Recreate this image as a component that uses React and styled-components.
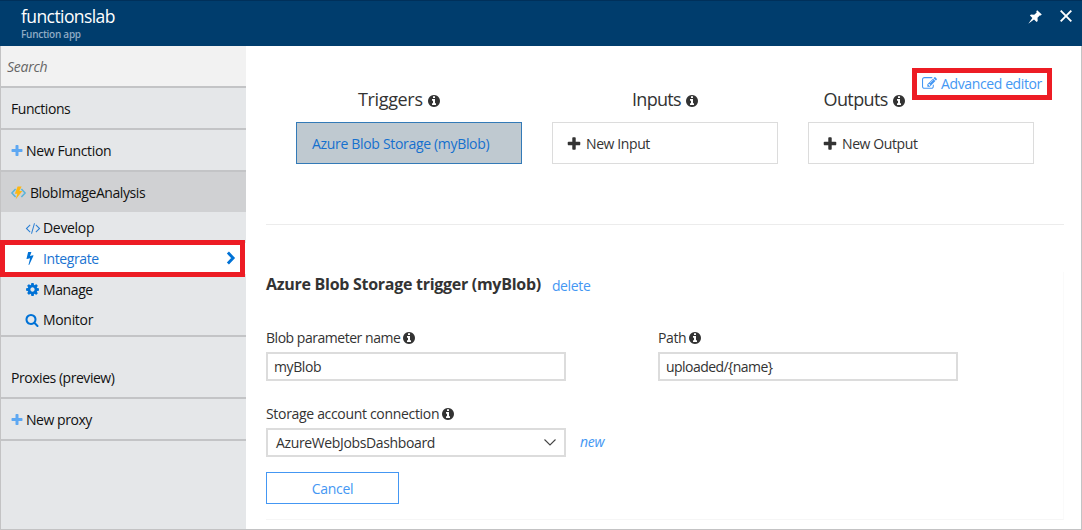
import React from "react";
import styled, { createGlobalStyle } from "styled-components";

const Global = createGlobalStyle`
  *, *::before, *::after { box-sizing: border-box; }
  body { margin: 0; background: #fff; }
  body, input, button { font-family: "Open Sans", "Noto Sans", sans-serif; font-size: 14px; }
`;

/* ---------- icons ---------- */

const PATHS = {
  info: "M1152 1376v-160q0-14-9-23t-23-9h-96v-512q0-14-9-23t-23-9h-320q-14 0-23 9t-9 23v160q0 14 9 23t23 9h96v320h-96q-14 0-23 9t-9 23v160q0 14 9 23t23 9h448q14 0 23-9t9-23zm-128-896v-160q0-14-9-23t-23-9h-192q-14 0-23 9t-9 23v160q0 14 9 23t23 9h192q14 0 23-9t9-23zm640 416q0 209-103 385.5t-279.5 279.5-385.5 103-385.5-103-279.5-279.5-103-385.5 103-385.5 279.5-279.5 385.5-103 385.5 103 279.5 279.5 103 385.5z",
  plus: "M1600 736v192q0 40-28 68t-68 28h-416v416q0 40-28 68t-68 28h-192q-40 0-68-28t-28-68v-416h-416q-40 0-68-28t-28-68v-192q0-40 28-68t68-28h416v-416q0-40 28-68t68-28h192q40 0 68 28t28 68v416h416q40 0 68 28t28 68z",
  edit: "M888 1184l116-116-152-152-116 116v56h96v96h56zm440-720q-16-16-33 1l-350 350q-17 17-1 33t33-1l350-350q17-17 1-33zm80 594v190q0 119-84.5 203.5t-203.5 84.5h-832q-119 0-203.5-84.5t-84.5-203.5v-832q0-119 84.5-203.5t203.5-84.5h832q63 0 117 25 15 7 18 23 3 17-9 29l-49 49q-14 14-32 8-23-6-45-6h-832q-66 0-113 47t-47 113v832q0 66 47 113t113 47h832q66 0 113-47t47-113v-126q0-13 9-22l64-64q15-15 35-7t20 29zm-96-738l288 288-672 672h-288v-288zm444 132l-92 92-288-288 92-92q28-28 68-28t68 28l152 152q28 28 28 68t-28 68z",
  search: "M1216 832q0-185-131.5-316.5t-316.5-131.5-316.5 131.5-131.5 316.5 131.5 316.5 316.5 131.5 316.5-131.5 131.5-316.5zm512 832q0 52-38 90t-90 38q-54 0-90-38l-343-342q-179 124-399 124-143 0-273.5-55.5t-225-150-150-225-55.5-273.5 55.5-273.5 150-225 225-150 273.5-55.5 273.5 55.5 225 150 150 225 55.5 273.5q0 220-124 399l343 343q37 37 37 90z",
  cog: "M1152 896q0-106-75-181t-181-75-181 75-75 181 75 181 181 75 181-75 75-181zm512-109v222q0 12-8 23t-20 13l-185 28q-19 54-39 91 35 50 107 138 10 12 10 25t-9 23q-27 37-99 108t-94 71q-12 0-26-9l-138-108q-44 23-91 38-16 136-29 186-7 28-36 28h-222q-14 0-24.5-8.5t-11.5-21.5l-28-184q-49-16-90-37l-141 107q-10 9-25 9-14 0-25-11-126-114-165-168-7-10-7-23 0-12 8-23 15-21 51-66.5t54-70.5q-27-50-41-99l-183-27q-13-2-21-12.5t-8-23.5v-222q0-12 8-23t19-13l186-28q14-46 39-92-40-57-107-138-10-12-10-24 0-10 9-23 26-36 98.5-107.5t94.5-71.5q13 0 26 10l138 107q44-23 91-38 16-136 29-186 7-28 36-28h222q14 0 24.5 8.5t11.5 21.5l28 184q49 16 90 37l142-107q9-9 24-9 13 0 25 10 129 119 165 170 7 8 7 22 0 12-8 23-15 21-51 66.5t-54 70.5q26 50 41 98l183 28q13 2 21 12.5t8 23.5z",
  bolt: "M1333 566q18 20 7 44l-540 1157q-13 25-42 25-4 0-14-2-17-5-25.5-19t-4.5-30l197-808-406 101q-4 1-12 1-18 0-31-11-18-16-13-39l201-825q4-14 16-23t28-9h328q19 0 32 12.5t13 29.5q0 8-5 18l-171 463 396-98q8-2 12-2 19 0 34 15z",
  code: "M553 1399l-50 50q-10 10-23 10t-23-10l-466-466q-10-10-10-23t10-23l466-466q10-10 23-10t23 10l50 50q10 10 10 23t-10 23l-393 393 393 393q10 10 10 23t-10 23zm591-1067l-373 1291q-4 13-15.5 19.5t-23.5 2.5l-62-17q-13-4-19.5-15.5t-2.5-24.5l373-1291q4-13 15.5-19.5t23.5-2.5l62 17q13 4 19.5 15.5t2.5 24.5zm657 651l-466 466q-10 10-23 10t-23-10l-50-50q-10-10-10-23t10-23l393-393-393-393q-10-10-10-23t10-23l50-50q10-10 23-10t23 10l466 466q10 10 10 23t-10 23z",
};

const Svg = styled.svg`
  display: block;
  flex: none;
  overflow: visible;
  fill: ${(p) => p.$color || "currentColor"};
`;

const Icon = ({ name, size = 14, color }) => (
  <Svg viewBox="0 0 1792 1792" width={size} height={size} $color={color}>
    <path d={PATHS[name]} />
  </Svg>
);

const FunctionIcon = () => (
  <Svg width="15" height="14" viewBox="0 0 15 14">
    <path d="M4.6 3 .9 7l3.7 4M10.4 3l3.7 4-3.7 4" fill="none" stroke="#59b4d9" strokeWidth="1.5" />
    <path d="M6.6.6h4L8.4 5h3L4.6 13.4 6.4 7.8H3.8z" fill="#fcb714" />
  </Svg>
);

const PinIcon = () => (
  <Svg width="14" height="14" viewBox="0 0 14 14">
    <path d="M9.2.2 13.8 4.6l-1.2.9-.9-.1-2.2 2.4.2 3.1-1.1 1-2.6-2.5L.3 13.8 4.4 8.1 1.9 5.6l1.1-1.1 3.2.2 2.5-2.3-.4-1.2z" />
  </Svg>
);

const CloseIcon = () => (
  <Svg width="12" height="12" viewBox="0 0 12 12">
    <path d="M.7.7l10.6 10.6M11.3.7.7 11.3" stroke="#fff" strokeWidth="1.9" />
  </Svg>
);

const ChevronRight = () => (
  <Svg width="10" height="14" viewBox="0 0 10 14">
    <path d="M1.9 1.6 7.1 7l-5.2 5.4" fill="none" stroke="#0072d6" strokeWidth="2.9" />
  </Svg>
);

const ChevronDown = () => (
  <Svg width="12" height="7" viewBox="0 0 12 7">
    <path d="M.5.5 6 6 11.5.5" fill="none" stroke="#444" strokeWidth="1.1" />
  </Svg>
);

/* ---------- frame ---------- */

const Blade = styled.div`
  position: relative;
  display: flex;
  flex-direction: column;
  width: 1082px;
  height: 530px;
  overflow: hidden;
  color: #333;
`;

const Header = styled.header`
  display: flex;
  justify-content: space-between;
  flex: none;
  height: 46px;
  padding: 5px 10px 0 21px;
  background: #003d6d;
  border-top: 1px solid #00305a;
  color: #fff;
`;

const Title = styled.h1`
  margin: 0;
  font-size: 17.5px;
  line-height: 21px;
  font-weight: 400;
  white-space: nowrap;
  letter-spacing: -0.58px;
`;

const Subtitle = styled.div`
  font-size: 10px;
  line-height: 14px;
  font-weight: 600;
  color: #8fabc5;
  letter-spacing: -0.27px;
`;

const HeaderActions = styled.div`
  display: flex;
  align-items: flex-start;
  gap: 18px;
  padding-top: 4px;
`;

const Body = styled.div`
  display: flex;
  flex: 1;
  min-height: 0;
  border: 1px solid #c3c3c4;
  border-top: 0;
`;

const Label = styled.span`
  white-space: nowrap;
  letter-spacing: ${(p) => p.$ls ?? -0.32}px;
`;

/* ---------- sidebar ---------- */

const Sidebar = styled.nav`
  flex: none;
  width: 245px;
  background: #e5e7e9;
  color: #111;
`;

const SearchBox = styled.div`
  display: flex;
  align-items: center;
  height: 42px;
  padding: 0 6px;
  background: #f2f2f2;
  border-bottom: 2px solid #c3c4c6;
  color: #666;
  font-style: italic;
`;

const NavRow = styled.div`
  display: flex;
  align-items: ${(p) => (p.$tall ? "flex-end" : "center")};
  gap: 2px;
  height: ${(p) => (p.$tall ? 62 : 42)}px;
  padding: ${(p) => (p.$tall ? "0 10px 10px" : p.$icon ? "0 9px" : "0 10px")};
  border-bottom: 2px solid #c3c4c6;

  svg { margin-top: 1px; }
`;

const FunctionRow = styled(NavRow)`
  gap: 4px;
  height: 40px;
  padding-top: 1px;
  background: #d0d1d3;
  border-bottom: 0;
`;

const SubNav = styled.div`
  height: 125px;
  border-bottom: 2px solid #c3c4c6;
`;

const SubRow = styled.div`
  display: flex;
  align-items: center;
  height: 30.75px;
  padding: 0.5px 10px 0 24px;
  background: ${(p) => (p.$active ? "#fff" : "transparent")};
  color: ${(p) => (p.$active ? "#1a73d2" : "#111")};
`;

const IconSlot = styled.span`
  width: 18px;
  margin-left: ${(p) => p.$shift || 0}px;
  margin-right: ${(p) => -(p.$shift || 0)}px;
`;

const Grow = styled.span`
  flex: 1;
`;

/* ---------- main panel ---------- */

const Main = styled.main`
  flex: 1;
  padding: 43px 17px 0 20px;
`;

const Bindings = styled.section`
  display: flex;
  gap: 30px;
  height: 136px;
  padding-left: 30px;
  border-bottom: 1px solid #ececec;
`;

const BindingColumn = styled.div`
  width: 226px;
`;

const BindingTitle = styled.h2`
  display: flex;
  align-items: center;
  gap: 4px;
  height: 20px;
  margin: 0 0 13px;
  padding-left: ${(p) => p.$indent}px;
  font-size: 18px;
  line-height: 22px;
  font-weight: 400;

  svg { margin-top: 4px; }
`;

const BindingCard = styled.div`
  display: flex;
  align-items: center;
  gap: 4px;
  height: 42px;
  padding: 1px ${(p) => (p.$selected ? 15 : 13)}px 0;
  border: 1px solid ${(p) => (p.$selected ? "#337ab7" : "#dcdcdc")};
  background: ${(p) => (p.$selected ? "#bfc9d0" : "#fff")};
  color: ${(p) => (p.$selected ? "#1570ce" : "#333")};
`;

const Details = styled.section`
  height: 248px;
  margin-top: 47px;
  border-right: 1px solid #fafafa;
  border-bottom: 1px solid #f6f6f6;
`;

const DetailsHeading = styled.div`
  display: flex;
  align-items: flex-start;
  gap: 11px;
  height: 56px;
`;

const DetailsTitle = styled.h3`
  margin: 0;
  font-size: 16px;
  line-height: 24px;
  font-weight: 700;
  white-space: nowrap;
  letter-spacing: -0.28px;
`;

const DeleteLink = styled.a`
  padding-top: 2px;
  line-height: 24px;
  color: #4497f3;
  letter-spacing: -0.35px;
`;

const NewLink = styled.a`
  margin-top: -3px;
  color: #4497f3;
  font-style: italic;
  letter-spacing: -0.3px;
`;

const FieldRow = styled.div`
  display: flex;
  height: 76px;
`;

const Field = styled.div`
  width: 392px;
`;

const FieldLabel = styled.label`
  display: flex;
  align-items: center;
  gap: 2px;
  height: 18px;
  margin-bottom: 6px;

  svg { margin-top: 2px; }
`;

const Control = styled.div`
  display: flex;
  align-items: center;
  justify-content: space-between;
  width: 300px;
  height: 29px;
  padding: 0 8px 0 ${(p) => p.$pad || 6}px;
  border: 2px solid #dcdcdc;
  background: #fff;
`;

const Inline = styled.div`
  display: flex;
  align-items: center;
  gap: 14px;
`;

const ConnectionRow = styled(FieldRow)`
  height: 68px;
`;

const CancelButton = styled.button`
  display: block;
  width: 133px;
  height: 32px;
  padding: 0;
  border: 1px solid #4497f3;
  background: #fff;
  color: #4497f3;
`;

/* ---------- highlights laid over the blade ---------- */

const Highlight = styled.div`
  position: absolute;
  border: 5px solid #ed1c24;
`;

const IntegrateHighlight = styled(Highlight)`
  left: 0;
  top: 240px;
  width: 245px;
  height: 37px;
`;

const EditorHighlight = styled(Highlight)`
  left: 912px;
  top: 68px;
  width: 140px;
  height: 32px;
  display: flex;
  align-items: center;
  gap: 4px;
  padding: 0 0 2px 5px;
  color: #4497f3;
`;

function Binding({ title, ls, indent, item, itemLs, selected }) {
  return (
    <BindingColumn>
      <BindingTitle $indent={indent}>
        <Label $ls={ls}>{title}</Label>
        <Icon name="info" />
      </BindingTitle>
      <BindingCard $selected={selected}>
        {!selected && <Icon name="plus" size={16} />}
        <Label $ls={itemLs}>{item}</Label>
      </BindingCard>
    </BindingColumn>
  );
}

export default function App() {
  return (
    <>
      <Global />
      <Blade>
        <Header>
          <div>
            <Title>functionslab</Title>
            <Subtitle>Function app</Subtitle>
          </div>
          <HeaderActions>
            <PinIcon />
            <CloseIcon />
          </HeaderActions>
        </Header>
        <Body>
          <Sidebar>
            <SearchBox><Label $ls={-0.25}>Search</Label></SearchBox>
            <NavRow><Label $ls={-0.45}>Functions</Label></NavRow>
            <NavRow $icon><Icon name="plus" color="#5ea8f2" /><Label $ls={-0.36}>New Function</Label></NavRow>
            <FunctionRow><FunctionIcon /><Label $ls={-0.42}>BlobImageAnalysis</Label></FunctionRow>
            <SubNav>
              <SubRow><IconSlot $shift={1}><Icon name="code" color="#2a7fd4" /></IconSlot><Label>Develop</Label></SubRow>
              <SubRow $active>
                <IconSlot $shift={-2}><Icon name="bolt" color="#0072d6" /></IconSlot>
                <Label $ls={-0.4}>Integrate</Label>
                <Grow />
                <ChevronRight />
              </SubRow>
              <SubRow><IconSlot><Icon name="cog" size={15} color="#0072d6" /></IconSlot><Label $ls={-0.4}>Manage</Label></SubRow>
              <SubRow><IconSlot><Icon name="search" color="#0072d6" /></IconSlot><Label>Monitor</Label></SubRow>
            </SubNav>
            <NavRow $tall><Label $ls={-0.46}>Proxies (preview)</Label></NavRow>
            <NavRow $icon><Icon name="plus" color="#5ea8f2" /><Label $ls={-0.45}>New proxy</Label></NavRow>
          </Sidebar>
          <Main>
            <Bindings>
              <Binding title="Triggers" ls={-0.35} indent={62} item="Azure Blob Storage (myBlob)" selected />
              <Binding title="Inputs" ls={-0.7} indent={80} item="New Input" itemLs={-0.4} />
              <Binding title="Outputs" ls={-0.6} indent={15.5} item="New Output" itemLs={-0.4} />
            </Bindings>
            <Details>
              <DetailsHeading>
                <DetailsTitle>Azure Blob Storage trigger (myBlob)</DetailsTitle>
                <DeleteLink>delete</DeleteLink>
              </DetailsHeading>
              <FieldRow>
                <Field>
                  <FieldLabel><Label $ls={-0.47}>Blob parameter name</Label><Icon name="info" /></FieldLabel>
                  <Control><Label $ls={-0.4}>myBlob</Label></Control>
                </Field>
                <Field>
                  <FieldLabel><Label $ls={-0.4}>Path</Label><Icon name="info" /></FieldLabel>
                  <Control><Label $ls={-0.55}>uploaded/{"{name}"}</Label></Control>
                </Field>
              </FieldRow>
              <ConnectionRow>
                <Field>
                  <FieldLabel><Label>Storage account connection</Label><Icon name="info" /></FieldLabel>
                  <Inline>
                    <Control $pad={8}><Label $ls={-0.36}>AzureWebJobsDashboard</Label><ChevronDown /></Control>
                    <NewLink>new</NewLink>
                  </Inline>
                </Field>
              </ConnectionRow>
              <CancelButton><Label>Cancel</Label></CancelButton>
            </Details>
          </Main>
        </Body>
        <IntegrateHighlight />
        <EditorHighlight><Icon name="edit" size={15} /><Label $ls={-0.38}>Advanced editor</Label></EditorHighlight>
      </Blade>
    </>
  );
}
